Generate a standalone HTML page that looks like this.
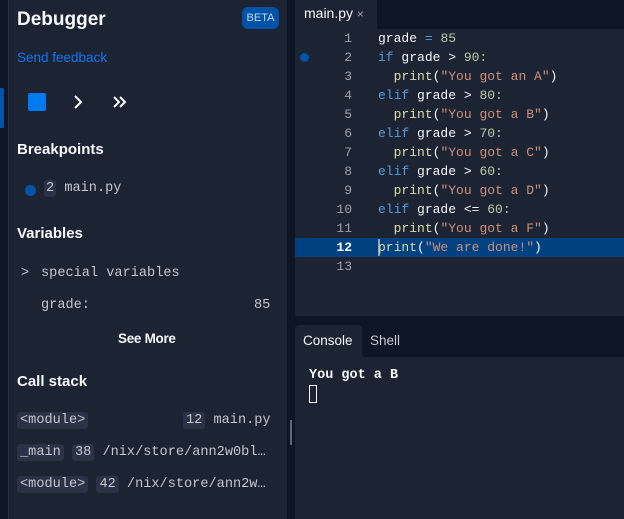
<!DOCTYPE html>
<html><head><style>
*{margin:0;padding:0;box-sizing:border-box}
body{width:624px;height:519px;background:#0e1525;position:relative;overflow:hidden;font-family:"Liberation Sans",sans-serif;color:#f5f9fc}
.abs{position:absolute}
.mono{font-family:"Liberation Mono",monospace}
#left{left:8px;top:0;width:279px;height:519px;background:#1c2333;border-left:1px solid #2b3245}
h2{position:absolute;left:17px;font-size:15px;font-weight:bold;color:#f5f9fc}
.chip{background:#2b3245;border-radius:3px;padding:1px 3px}
.code{position:absolute;left:295px;top:29px;width:329px;height:287px;background:#1c2333}
.ln{position:absolute;width:57px;text-align:right;color:#9da2a6;font-size:13px;font-family:"Liberation Mono",monospace;left:295px}
.cl{position:absolute;left:378px;font-size:13px;font-family:"Liberation Mono",monospace;color:#f5f9fc;white-space:pre}
.k{color:#569cd6}.n{color:#b5cea8}.s{color:#ce9178}.f{color:#dcdcaa}
.lm{font-size:13.6px;color:#c2c8cc}
</style></head><body>
<div class="abs" style="left:0;top:88px;width:4px;height:40px;background:#0053a6;border-radius:0 2px 2px 0"></div>
<div id="left" class="abs"></div>
<div class="abs" style="left:17px;top:9px;font-size:19px;font-weight:bold">Debugger</div>
<div class="abs" style="left:242px;top:7px;width:37px;height:22px;background:#0053a6;border-radius:6px;font-size:11px;color:#c2d9f5;text-align:center;line-height:22px">BETA</div>
<div class="abs" style="left:17px;top:50px;font-size:13.5px;color:#0f76f5">Send feedback</div>
<div class="abs" style="left:28px;top:93px;width:18px;height:18px;background:#0079f2;border-radius:2px"></div>
<svg class="abs" style="left:70px;top:94px" width="60" height="16"><path d="M5 2l6 6-6 6" stroke="#f5f9fc" stroke-width="2" fill="none"/><path d="M44 3l5 5-5 5M50 3l5 5-5 5" stroke="#f5f9fc" stroke-width="2" fill="none"/></svg>
<h2 style="top:141px">Breakpoints</h2>
<div class="abs" style="left:25px;top:185px;width:11px;height:11px;border-radius:50%;background:#0053a6"></div>
<div class="abs mono lm" style="left:44px;top:181px"><span class="chip" style="padding:1px 2px">2</span> main.py</div>
<h2 style="top:225px">Variables</h2>
<div class="abs mono lm" style="left:21px;top:266px">&gt;</div>
<div class="abs mono lm" style="left:41px;top:266px">special variables</div>
<div class="abs mono lm" style="left:41px;top:298px">grade:</div>
<div class="abs mono lm" style="left:254px;top:298px">85</div>
<div class="abs" style="left:118px;top:331px;font-size:13.5px;font-weight:bold;letter-spacing:-0.3px">See More</div>
<h2 style="top:373px">Call stack</h2>
<div class="abs mono lm" style="left:17px;top:413px"><span class="chip">&lt;module&gt;</span></div>
<div class="abs mono lm" style="left:183px;top:413px"><span class="chip">12</span> main.py</div>
<div class="abs mono lm" style="left:17px;top:445px;white-space:pre"><span class="chip">_main</span> <span class="chip">38</span> /nix/store/ann2w0bl…</div>
<div class="abs mono lm" style="left:17px;top:477px;white-space:pre"><span class="chip">&lt;module&gt;</span> <span class="chip">42</span> /nix/store/ann2w…</div>
<div class="abs" style="left:290px;top:420px;width:2px;height:25px;background:#5f6775"></div>

<div class="abs" style="left:295px;top:0;width:82px;height:29px;background:#1c2333"></div>
<div class="abs" style="left:304px;top:5px;font-size:14px">main.py <span style="color:#9da2a6;font-size:12px">×</span></div>
<div class="code"></div>
<div class="abs" style="left:295px;top:238px;width:329px;height:19px;background:#004182"></div>
<div class="abs" style="left:378px;top:239px;width:2px;height:17px;background:#9da2a6"></div>
<div class="abs" style="left:300px;top:53px;width:9px;height:9px;border-radius:50%;background:#0053a6"></div>
<div class="ln" style="top:31px">1</div><div class="ln" style="top:50px">2</div><div class="ln" style="top:69px">3</div><div class="ln" style="top:88px">4</div><div class="ln" style="top:107px">5</div><div class="ln" style="top:126px">6</div><div class="ln" style="top:145px">7</div><div class="ln" style="top:164px">8</div><div class="ln" style="top:183px">9</div><div class="ln" style="top:202px">10</div><div class="ln" style="top:221px">11</div><div class="ln" style="top:240px;color:#fff;font-weight:bold">12</div><div class="ln" style="top:259px">13</div>
<div class="cl" style="top:31px">grade <span class="k">=</span> <span class="n">85</span></div>
<div class="cl" style="top:50px"><span class="k">if</span> grade &gt; <span class="n">90:</span></div>
<div class="cl" style="top:69px">  <span class="f">print</span>(<span class="s">"You got an A"</span>)</div>
<div class="cl" style="top:88px"><span class="k">elif</span> grade &gt; <span class="n">80:</span></div>
<div class="cl" style="top:107px">  <span class="f">print</span>(<span class="s">"You got a B"</span>)</div>
<div class="cl" style="top:126px"><span class="k">elif</span> grade &gt; <span class="n">70:</span></div>
<div class="cl" style="top:145px">  <span class="f">print</span>(<span class="s">"You got a C"</span>)</div>
<div class="cl" style="top:164px"><span class="k">elif</span> grade &gt; <span class="n">60:</span></div>
<div class="cl" style="top:183px">  <span class="f">print</span>(<span class="s">"You got a D"</span>)</div>
<div class="cl" style="top:202px"><span class="k">elif</span> grade &lt;= <span class="n">60:</span></div>
<div class="cl" style="top:221px">  <span class="f">print</span>(<span class="s">"You got a F"</span>)</div>
<div class="cl" style="top:240px"><span class="f">print</span>(<span class="s">"We are done!"</span>)</div>

<div class="abs" style="left:295px;top:325px;width:67px;height:32px;background:#1c2333;border-radius:4px 4px 0 0"></div>
<div class="abs" style="left:303px;top:333px;font-size:13.5px">Console</div>
<div class="abs" style="left:370px;top:333px;font-size:13.5px;color:#c2c8cc">Shell</div>
<div class="abs" style="left:295px;top:357px;width:329px;height:162px;background:#1c2333"></div>
<div class="abs mono" style="left:309px;top:368px;font-size:13.5px;font-weight:bold">You got a B</div>
<div class="abs" style="left:309px;top:385px;width:8px;height:18px;border:1.5px solid #f5f9fc"></div>
</body></html>
